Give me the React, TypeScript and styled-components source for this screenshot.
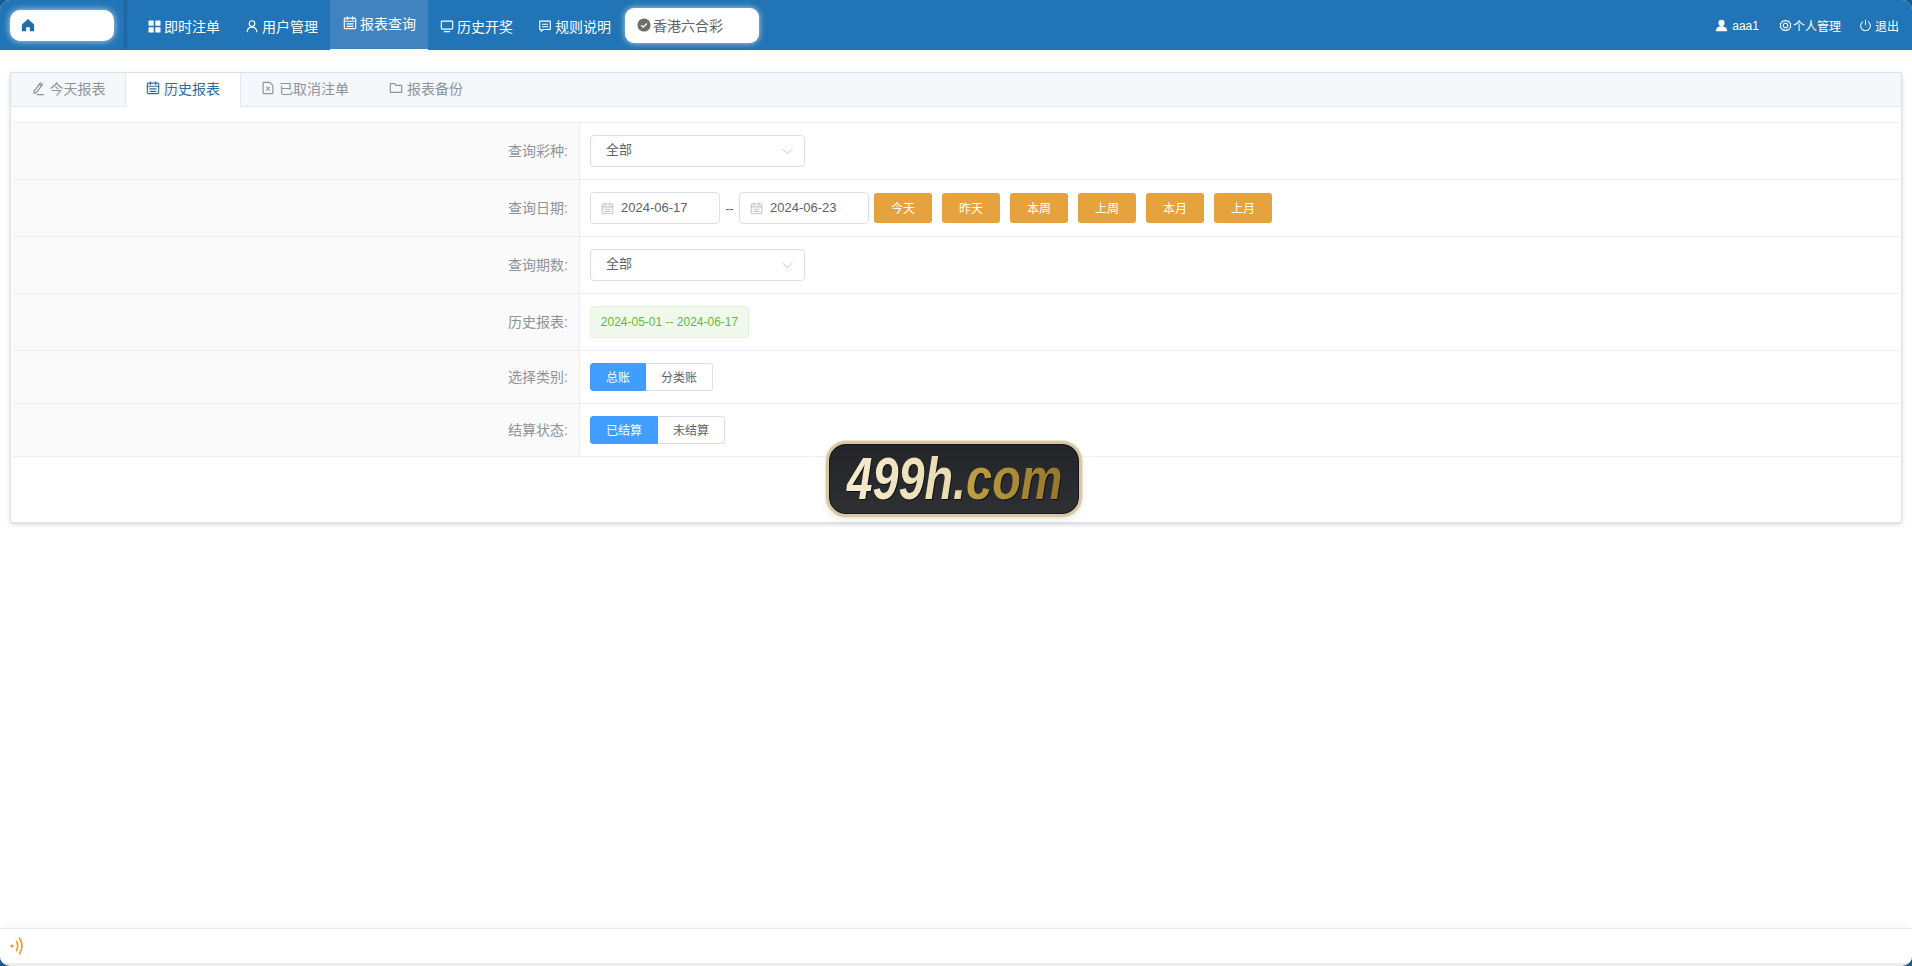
import React from "react";
import styled, { createGlobalStyle } from "styled-components";

const Global = createGlobalStyle`
  html, body { margin: 0; padding: 0; background: #1a5a8e; }
  body { font-family: "Liberation Sans", "Noto Sans CJK SC", sans-serif; font-size: 13px; color: #606266; }
  * { box-sizing: border-box; }
`;

const Page = styled.div`
  width: 1912px;
  height: 966px;
  display: flex;
  flex-direction: column;
  background: #eeeeee;
  border-radius: 10px;
  overflow: hidden;
  position: relative;
`;

const TopBar = styled.header`
  height: 50px;
  flex: none;
  background: #2174b5;
  display: flex;
  align-items: stretch;
  color: #fff;
`;

const LogoCell = styled.div`
  width: 127px;
  flex: none;
  padding-left: 10px;
  display: flex;
  align-items: center;
  border-right: 3px solid #1e69a5;
  margin-right: 9px;
`;

const HomePill = styled.div`
  width: 104px;
  height: 31px;
  background: #fff;
  border-radius: 10px;
  box-shadow: 0 0 7px rgba(255, 255, 255, 0.75);
  display: flex;
  align-items: center;
  padding-left: 11px;
  color: #1f6fae;
`;

const NavItem = styled.div<{ $active?: boolean; $after?: number }>`
  display: flex;
  align-items: center;
  gap: 3px;
  padding: ${(p) => (p.$active ? "0 12px 4px 13px" : "2px 12px 0")};
  margin-right: ${(p) => p.$after ?? 0}px;
  font-size: 14px;
  background: ${(p) => (p.$active ? "#4083bf" : "transparent")};
  border-bottom: ${(p) => (p.$active ? "1px solid #fff" : "none")};
  white-space: nowrap;
`;

const LotteryPill = styled.div`
  align-self: center;
  width: 134px;
  height: 35px;
  margin-left: 2px;
  margin-top: 1px;
  background: #fff;
  border-radius: 9px;
  box-shadow: 0 0 6px rgba(255, 255, 255, 0.7);
  color: #606266;
  font-size: 14px;
  display: flex;
  align-items: center;
  gap: 2px;
  padding-left: 12px;
  padding-bottom: 2px;
`;

const RightNav = styled.div`
  margin-left: auto;
  display: flex;
  align-items: center;
  gap: 18px;
  padding: 1px 13px 0 0;
  font-size: 12px;
`;

const RightItem = styled.div<{ $gap?: number; $after?: number }>`
  display: flex;
  align-items: center;
  gap: ${(p) => p.$gap ?? 4}px;
  margin-right: ${(p) => p.$after ?? 0}px;
  white-space: nowrap;
`;

const Main = styled.main`
  flex: 1;
  padding: 22px 10px 0;
  background: #fff;
`;

const Card = styled.section`
  height: 451px;
  border: 1px solid #dcdfe6;
  box-shadow: 0 2px 4px rgba(0, 0, 0, 0.12), 0 0 6px rgba(0, 0, 0, 0.04);
  background: #fff;
`;

const Tabs = styled.div`
  height: 34px;
  background: #f5f8fb;
  border-bottom: 1px solid #e4e7ed;
  display: flex;
`;

const Tab = styled.div<{ $active?: boolean; $w?: number }>`
  width: ${(p) => (p.$w ? `${p.$w}px` : "auto")};
  padding: ${(p) => (p.$active ? "0 0 4px" : p.$w ? "0 0 3px" : "0 20px 3px")};
  display: flex;
  align-items: center;
  justify-content: center;
  gap: 4px;
  font-size: 14px;
  color: ${(p) => (p.$active ? "#2a6ea6" : "#909399")};
  background: ${(p) => (p.$active ? "#fff" : "transparent")};
  height: ${(p) => (p.$active ? "34px" : "33px")};
  border-left: ${(p) => (p.$active ? "1px solid #e4e7ed" : "none")};
  border-right: ${(p) => (p.$active ? "1px solid #e4e7ed" : "none")};
`;

const FormTable = styled.div`
  margin: 15px 1px 0 2px;
  border-top: 1px solid #ebeef5;
`;

const Row = styled.div<{ $h: number }>`
  height: ${(p) => p.$h}px;
  display: flex;
  border-bottom: 1px solid #ebeef5;
`;

const Label = styled.div`
  width: 567px;
  flex: none;
  background: #fafafa;
  border-right: 1px solid #ebeef5;
  display: flex;
  align-items: center;
  justify-content: flex-end;
  padding: 0 11px 3px 0;
  font-size: 14px;
  color: #909399;
`;

const Value = styled.div`
  flex: 1;
  display: flex;
  align-items: center;
  padding-left: 10px;
`;

const Select = styled.div`
  width: 215px;
  height: 32px;
  border: 1px solid #dcdfe6;
  border-radius: 4px;
  display: flex;
  align-items: center;
  justify-content: space-between;
  padding: 0 9px 0 15px;
  font-size: 13px;
  color: #606266;
`;

const SelectText = styled.span`
  position: relative;
  top: -3px;
`;

const DateBox = styled.div`
  width: 130px;
  height: 32px;
  border: 1px solid #dcdfe6;
  border-radius: 4px;
  display: flex;
  align-items: center;
  gap: 7px;
  padding: 0 0 2px 10px;
  font-size: 13px;
  color: #606266;
`;

const DateIcon = styled.span`
  color: #c0c4cc;
  display: flex;
  margin-top: 2px;
`;

const Dash = styled.span`
  width: 19px;
  text-align: center;
  font-size: 13px;
  color: #606266;
`;

const QuickGroup = styled.div`
  display: flex;
  gap: 10px;
  margin-left: 5px;
`;

const QuickBtn = styled.div`
  width: 58px;
  height: 30px;
  padding-bottom: 2px;
  background: #e6a23c;
  border-radius: 3px;
  color: #fff;
  font-size: 12px;
  display: flex;
  align-items: center;
  justify-content: center;
`;

const Tag = styled.div`
  width: 159px;
  height: 32px;
  background: #f0f9eb;
  border: 1px solid #e1f3d8;
  border-radius: 4px;
  color: #67b83f;
  font-size: 12px;
  display: flex;
  align-items: center;
  justify-content: center;
`;

const Segment = styled.div<{ $on?: boolean; $w: number }>`
  width: ${(p) => p.$w}px;
  height: 28px;
  padding-bottom: 2px;
  display: flex;
  align-items: center;
  justify-content: center;
  font-size: 12px;
  background: ${(p) => (p.$on ? "#409eff" : "#fff")};
  color: ${(p) => (p.$on ? "#fff" : "#606266")};
  border: ${(p) => (p.$on ? "1px solid #409eff" : "1px solid #dcdfe6")};
  border-left: ${(p) => (p.$on ? "1px solid #409eff" : "none")};
  border-radius: ${(p) => (p.$on ? "3px 0 0 3px" : "0 3px 3px 0")};
`;

const Badge = styled.div`
  position: absolute;
  left: 826px;
  top: 441px;
  width: 256px;
  height: 76px;
  border-radius: 20px;
  background: linear-gradient(180deg, #232428 0%, #2f3033 100%);
  border: 3px solid #d8c7a4;
  box-shadow: inset 0 0 0 1px #15161a, 0 0 0 1px #efe6d4, 0 3px 6px rgba(120, 100, 60, 0.12);
  display: flex;
  align-items: center;
  justify-content: center;
  overflow: hidden;
`;

const BadgeText = styled.span`
  font-family: "Liberation Sans", sans-serif;
  font-style: italic;
  font-weight: 700;
  font-size: 60px;
  line-height: 1;
  flex: none;
  transform: scaleX(0.78);
  background: linear-gradient(90deg, #f5eccf 0%, #e9dab0 52%, #bfa047 55%, #a98a36 78%, #94772c 100%);
  -webkit-background-clip: text;
  background-clip: text;
  color: transparent;
  filter: drop-shadow(1px 1px 0 #0d0d0d);
`;

const Footer = styled.footer`
  height: 35px;
  flex: none;
  margin-bottom: 3px;
  background: #fff;
  border-top: 1px solid #dfe6ec;
  box-shadow: 0 -2px 6px rgba(0, 0, 0, 0.04);
  display: flex;
  align-items: center;
  padding-left: 10px;
`;

const Ic = styled.svg.attrs({ fill: "none", stroke: "currentColor", strokeWidth: 1.3, strokeLinecap: "round", strokeLinejoin: "round", viewBox: "0 0 16 16" })<{ $s?: number }>`
  width: ${(p) => p.$s ?? 14}px;
  height: ${(p) => p.$s ?? 14}px;
  flex: none;
`;

const ChevronIc = styled(Ic)`
  color: #c0c4cc;
`;

const CalendarIcon = ({ s }: { s?: number }) => (
  <Ic $s={s}>
    <rect x="1.5" y="2.500" width="13" height="12" rx="1" />
    <path d="M1.500 6h13M5 1v3M11 1v3M4.500 9h7M4.500 11.800h7" />
  </Ic>
);

const Chevron = () => (
  <ChevronIc $s={15}>
    <path d="M3 5.500l5 5 5-5" strokeWidth="1" />
  </ChevronIc>
);

export default function App() {
  return (
    <>
      <Global />
      <Page>
        <TopBar>
          <LogoCell>
            <HomePill>
              <svg width="14" height="14" viewBox="0 0 16 16" fill="currentColor">
                <path d="M8 1L1 7.500V15h5v-4.500h4V15h5V7.500z" />
              </svg>
            </HomePill>
          </LogoCell>
          <NavItem $after={1}>
            <svg width="13" height="13" viewBox="0 0 13 13" fill="currentColor">
              <rect x="0.500" y="0.500" width="5.200" height="5.200" rx="0.500" />
              <rect x="7.300" y="0.500" width="5.200" height="5.200" rx="0.500" />
              <rect x="0.500" y="7.300" width="5.200" height="5.200" rx="0.500" />
              <rect x="7.300" y="7.300" width="5.200" height="5.200" rx="0.500" />
            </svg>
            即时注单
          </NavItem>
          <NavItem>
            <Ic $s={14}>
              <circle cx="8" cy="5.200" r="3.200" />
              <path d="M2.500 14.500c.4-3.400 2.600-5.200 5.500-5.200s5.100 1.800 5.500 5.200" />
            </Ic>
            用户管理
          </NavItem>
          <NavItem $active>
            <CalendarIcon />
            报表查询
          </NavItem>
          <NavItem $after={1}>
            <Ic $s={14}>
              <rect x="1.500" y="2.500" width="13" height="9" rx="1" />
              <path d="M5 14.500h6" />
            </Ic>
            历史开奖
          </NavItem>
          <NavItem>
            <Ic $s={14}>
              <path d="M2 2.500h12v9.500H6l-2.500 2v-2H2z" />
              <path d="M5 6h6M5 8.800h6" />
            </Ic>
            规则说明
          </NavItem>
          <LotteryPill>
            <svg width="14" height="14" viewBox="0 0 16 16">
              <circle cx="8" cy="8" r="7.500" fill="#6f6c6c" />
              <path d="M4.800 8.200l2.200 2.200 4.200-4.200" fill="none" stroke="#fff" strokeWidth="1.500" />
            </svg>
            香港六合彩
          </LotteryPill>
          <RightNav>
            <RightItem $after={2}>
              <svg width="13" height="13" viewBox="0 0 16 16" fill="currentColor">
                <circle cx="8" cy="4.800" r="3.800" />
                <path d="M1 15c0-4 3-6 7-6s7 2 7 6z" />
              </svg>
              aaa1
            </RightItem>
            <RightItem $gap={1}>
              <Ic $s={13}>
                <circle cx="8" cy="8" r="2.800" />
                <path d="M8 1.500l1.700 1.200 2.200-.2.800 2 1.800 1.300-.6 2.200.6 2.200-1.800 1.300-.8 2-2.200-.2L8 14.500l-1.700-1.200-2.200.2-.8-2-1.800-1.300.6-2.200-.6-2.200 1.800-1.300.8-2 2.200.2z" />
              </Ic>
              个人管理
            </RightItem>
            <RightItem $gap={3}>
              <Ic $s={13}>
                <path d="M8 1.500v6M4.500 3.500a6 6 0 1 0 7 0" />
              </Ic>
              退出
            </RightItem>
          </RightNav>
        </TopBar>
        <Main>
          <Card>
            <Tabs>
              <Tab $w={114}>
                <Ic $s={15}>
                  <path d="M3.500 10.500L10 2l2.300 1.700L5.800 12.300l-2.800.9zM6.500 14.500h7M8.800 3.500l2.300 1.800" />
                </Ic>
                今天报表
              </Tab>
              <Tab $active $w={116}>
                <CalendarIcon />
                历史报表
              </Tab>
              <Tab>
                <Ic $s={14}>
                  <path d="M2.500 1.500h7.500l3.500 3.500v9.500h-11z" />
                  <path d="M6.300 7l3.400 3.400M9.700 7l-3.400 3.400" />
                </Ic>
                已取消注单
              </Tab>
              <Tab>
                <Ic $s={14}>
                  <path d="M1.500 3h5l1.500 2h6.500v8h-13z" />
                </Ic>
                报表备份
              </Tab>
            </Tabs>
            <FormTable>
              <Row $h={57}>
                <Label>查询彩种:</Label>
                <Value>
                  <Select><SelectText>全部</SelectText><Chevron /></Select>
                </Value>
              </Row>
              <Row $h={57}>
                <Label>查询日期:</Label>
                <Value>
                  <DateBox>
                    <DateIcon><CalendarIcon s={13} /></DateIcon>
                    2024-06-17
                  </DateBox>
                  <Dash>--</Dash>
                  <DateBox>
                    <DateIcon><CalendarIcon s={13} /></DateIcon>
                    2024-06-23
                  </DateBox>
                  <QuickGroup>
                    {["今天", "昨天", "本周", "上周", "本月", "上月"].map((t) => (
                      <QuickBtn key={t}>{t}</QuickBtn>
                    ))}
                  </QuickGroup>
                </Value>
              </Row>
              <Row $h={57}>
                <Label>查询期数:</Label>
                <Value>
                  <Select><SelectText>全部</SelectText><Chevron /></Select>
                </Value>
              </Row>
              <Row $h={57}>
                <Label>历史报表:</Label>
                <Value>
                  <Tag>2024-05-01 -- 2024-06-17</Tag>
                </Value>
              </Row>
              <Row $h={53}>
                <Label>选择类别:</Label>
                <Value>
                  <Segment $on $w={56}>总账</Segment>
                  <Segment $w={67}>分类账</Segment>
                </Value>
              </Row>
              <Row $h={53}>
                <Label>结算状态:</Label>
                <Value>
                  <Segment $on $w={68}>已结算</Segment>
                  <Segment $w={67}>未结算</Segment>
                </Value>
              </Row>
            </FormTable>
          </Card>
        </Main>
        <Footer>
          <svg width="14" height="18" viewBox="0 0 14 18" fill="none" stroke="#ed9a2f" strokeWidth="1.700" strokeLinecap="round">
            <circle cx="2" cy="9" r="1.600" fill="#ed9a2f" stroke="none" />
            <path d="M6.500 4.500Q9 9 6.500 13.500M9.500 1.200Q14.500 9 9.500 16.800" />
          </svg>
        </Footer>
        <Badge>
          <BadgeText>499h.com</BadgeText>
        </Badge>
      </Page>
    </>
  );
}
